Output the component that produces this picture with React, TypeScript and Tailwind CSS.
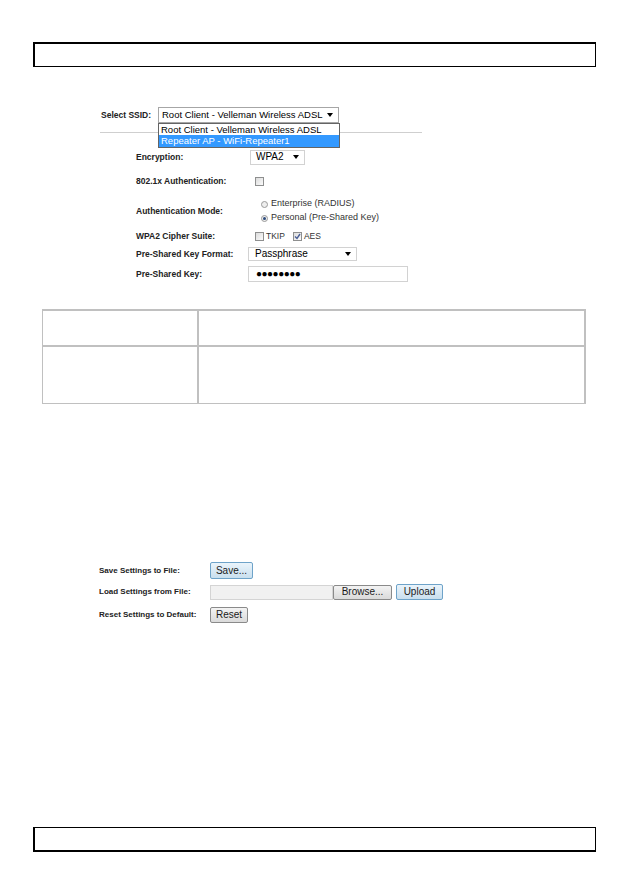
import React from "react";

function Arrow() {
  return (
    <svg width="6" height="4" viewBox="0 0 6 4" className="shrink-0">
      <path d="M0 0 L6 0 L3 4 Z" fill="#000" />
    </svg>
  );
}

function Checkbox({ checked = false }: { checked?: boolean }) {
  return (
    <span className="relative inline-flex w-[9px] h-[9px] border border-[#8e8f8f] bg-gradient-to-br from-[#dcdcdc] to-[#fbfbfb] shrink-0 items-center justify-center">
      {checked && (
        <svg width="7" height="7" viewBox="0 0 7 7">
          <path d="M1 3.5 L3 5.5 L6 1" stroke="#4a5f97" strokeWidth="1.4" fill="none" />
        </svg>
      )}
    </span>
  );
}

function Radio({ checked = false }: { checked?: boolean }) {
  return (
    <span className="inline-flex w-[7px] h-[7px] rounded-full border border-[#9a9a9a] bg-[#eeeeee] items-center justify-center shrink-0">
      {checked && <span className="w-[3px] h-[3px] rounded-full bg-[#2b4a7c]" />}
    </span>
  );
}

function Btn({ label, width, blue = false }: { label: string; width: string; blue?: boolean }) {
  return (
    <span
      className={`inline-flex items-center justify-center h-full rounded-[2px] border text-[10px] font-normal leading-none text-[#1a1a1a] ${width} ${
        blue
          ? "border-[#6ea3c9] bg-gradient-to-b from-[#eaf4fb] to-[#c9dfee]"
          : "border-[#8a8a8a] bg-gradient-to-b from-[#f3f3f3] to-[#dadada]"
      }`}
    >
      {label}
    </span>
  );
}

export default function App() {
  return (
    <div className="relative w-[630px] h-[891px] bg-white text-black font-['Liberation_Sans',Arial,sans-serif] flex flex-col">
      {/* page header frame */}
      <div className="ml-[33px] mt-[42px] w-[563px] h-[25px] border-l-2 border-t-2 border-r border-b border-black" />

      {/* Select SSID */}
      <div className="mt-[40px] pl-[101px] flex items-center h-[16px]">
        <span className="w-[57px] text-[8.5px] font-bold text-[#222]">Select SSID:</span>
        <div className="relative w-[181px] h-[16px] border border-[#a6a6a6] bg-white flex items-center justify-between pl-[3px] pr-[5px]">
          <span className="text-[9.5px] leading-none whitespace-nowrap">Root Client - Velleman Wireless ADSL</span>
          <Arrow />
          <div className="absolute left-[-1px] top-[15px] w-[182px] border border-[#646464] bg-white z-10 flex flex-col">
            <span className="h-[11px] flex items-center pl-[2px] text-[9.5px] leading-none whitespace-nowrap">
              Root Client - Velleman Wireless ADSL
            </span>
            <span className="h-[12px] flex items-center pl-[2px] text-[9.5px] leading-none whitespace-nowrap bg-[#3399ff] text-white">
              Repeater AP - WiFi-Repeater1
            </span>
          </div>
        </div>
      </div>

      <div className="mt-[9px] ml-[100px] w-[322px] h-px bg-[#cfcfcf]" />

      {/* wireless security rows */}
      <div className="mt-[15px] pl-[136px] flex flex-col text-[8.5px] text-[#222]">
        <div className="h-[18px] flex items-center">
          <span className="w-[114px] font-bold">Encryption:</span>
          <div className="w-[55px] h-[15px] border border-[#d2d2d2] flex items-center justify-between pl-[5px] pr-[5px] text-black">
            <span className="text-[10px] leading-none">WPA2</span>
            <Arrow />
          </div>
        </div>

        <div className="mt-[6px] h-[18px] flex items-center">
          <span className="w-[119px] font-bold">802.1x Authentication:</span>
          <Checkbox />
        </div>

        <div className="mt-[6px] h-[30px] flex items-center">
          <span className="w-[125px] font-bold">Authentication Mode:</span>
          <div className="flex flex-col text-[9px] text-[#333]">
            <div className="h-[14px] flex items-center gap-[3px]">
              <Radio />
              <span>Enterprise (RADIUS)</span>
            </div>
            <div className="h-[14px] flex items-center gap-[3px]">
              <Radio checked />
              <span>Personal (Pre-Shared Key)</span>
            </div>
          </div>
        </div>

        <div className="mt-[2px] h-[16px] flex items-center">
          <span className="w-[119px] font-bold">WPA2 Cipher Suite:</span>
          <div className="flex items-center text-[8.5px] text-[#333]">
            <Checkbox />
            <span className="ml-[2px]">TKIP</span>
            <span className="ml-[8px] flex">
              <Checkbox checked />
            </span>
            <span className="ml-[2px]">AES</span>
          </div>
        </div>

        <div className="mt-[2px] h-[16px] flex items-center">
          <span className="w-[112px] font-bold">Pre-Shared Key Format:</span>
          <div className="w-[109px] h-[14px] border border-[#d2d2d2] flex items-center justify-between pl-[6px] pr-[5px] text-black">
            <span className="text-[10px] leading-none">Passphrase</span>
            <Arrow />
          </div>
        </div>

        <div className="mt-[4px] h-[16px] flex items-center">
          <span className="w-[112px] font-bold">Pre-Shared Key:</span>
          <div className="w-[160px] h-[16px] border border-[#d2d2d2] flex items-center pl-[7px] text-black">
            <span className="text-[10px] leading-none tracking-[-0.5px]">●●●●●●●●</span>
          </div>
        </div>
      </div>

      {/* empty description table */}
      <div className="mt-[27px] ml-[42px] w-[544px] border-t-2 border-l border-r-2 border-b border-[#c0c0c0] flex flex-col">
        <div className="h-[36px] flex border-b-2 border-[#c0c0c0]">
          <div className="w-[156px] border-r-2 border-[#c0c0c0]" />
          <div className="flex-1" />
        </div>
        <div className="h-[56px] flex">
          <div className="w-[156px] border-r-2 border-[#c0c0c0]" />
          <div className="flex-1" />
        </div>
      </div>

      {/* backup / restore */}
      <div className="mt-[158px] pl-[99px] flex flex-col text-[8px] font-bold text-[#222]">
        <div className="h-[17px] flex items-center">
          <span className="w-[111px]">Save Settings to File:</span>
          <div className="h-[17px] flex">
            <Btn label="Save..." width="w-[43px]" blue />
          </div>
        </div>
        <div className="mt-[5px] h-[16px] flex items-center">
          <span className="w-[111px]">Load Settings from File:</span>
          <div className="h-[15px] w-[123px] border border-[#d4d4d4] bg-[#f1f1f1]" />
          <div className="h-[15px] flex">
            <Btn label="Browse..." width="w-[59px]" />
          </div>
          <div className="ml-[4px] h-[16px] flex">
            <Btn label="Upload" width="w-[47px]" blue />
          </div>
        </div>
        <div className="mt-[7px] h-[16px] flex items-center">
          <span className="w-[111px]">Reset Settings to Default:</span>
          <div className="h-[16px] flex">
            <Btn label="Reset" width="w-[38px]" />
          </div>
        </div>
      </div>

      {/* page footer frame */}
      <div className="ml-[33px] mt-[204px] w-[563px] h-[25px] border-l-2 border-t border-r border-b-2 border-black" />
    </div>
  );
}
